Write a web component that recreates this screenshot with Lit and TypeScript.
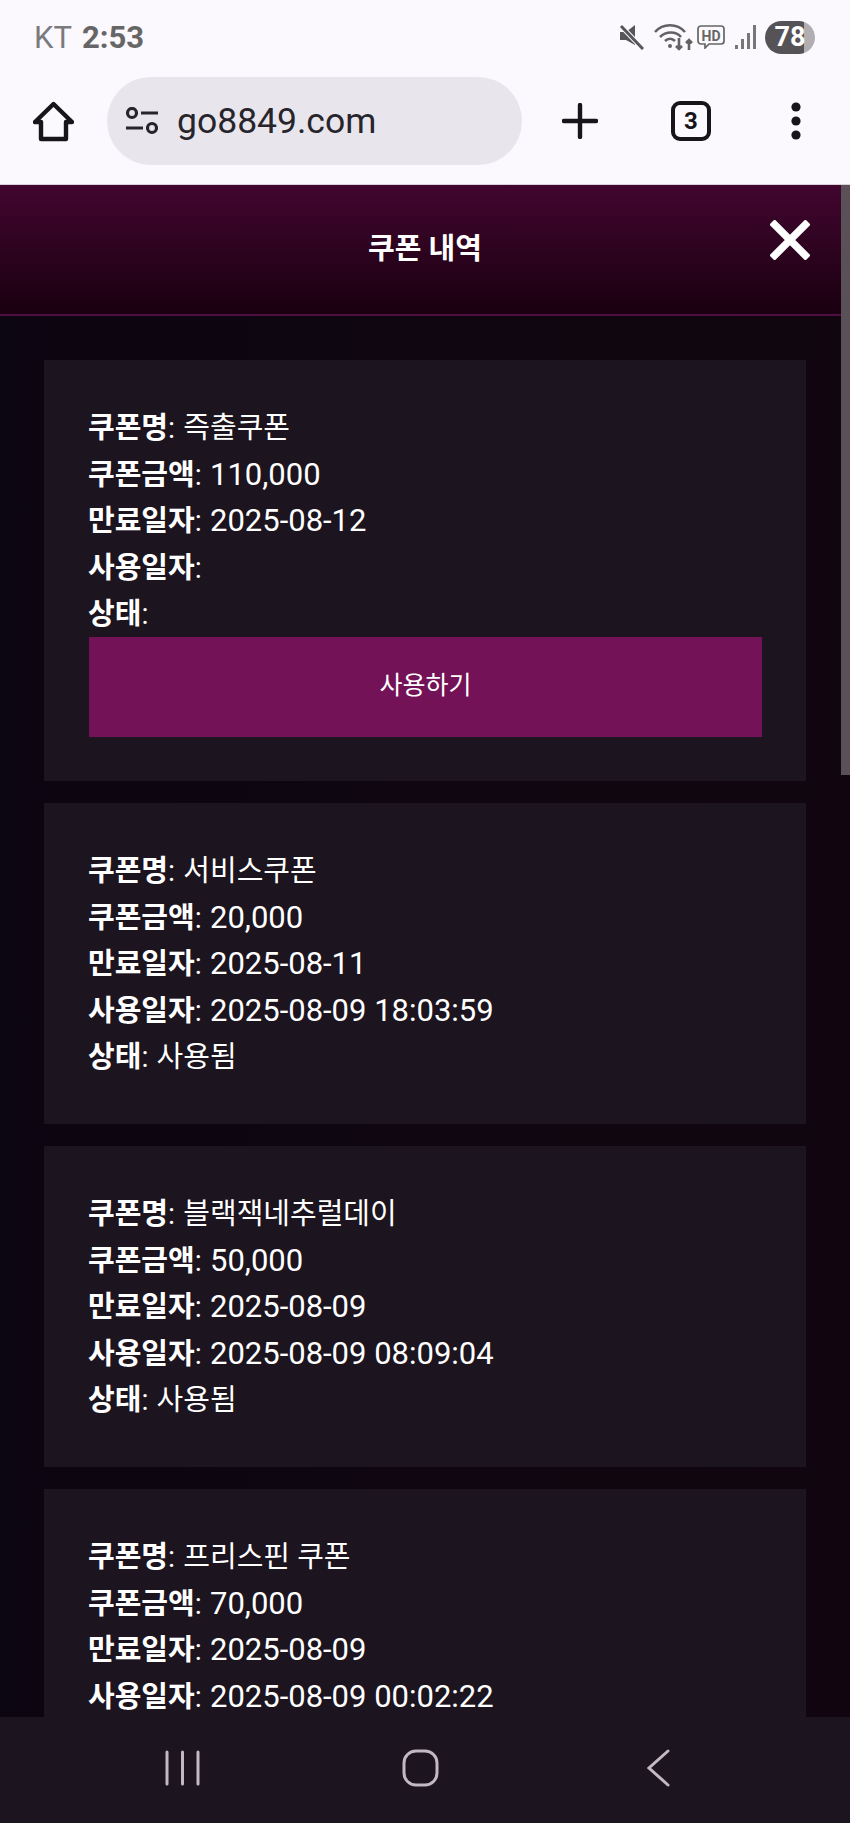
import { LitElement, html, css } from 'lit';
import { customElement } from 'lit/decorators.js';

const coupons = [
  { name: '즉출쿠폰', amount: '110,000', expires: '2025-08-12', used: '', status: '', usable: true },
  { name: '서비스쿠폰', amount: '20,000', expires: '2025-08-11', used: '2025-08-09 18:03:59', status: '사용됨' },
  { name: '블랙잭네추럴데이', amount: '50,000', expires: '2025-08-09', used: '2025-08-09 08:09:04', status: '사용됨' },
  { name: '프리스핀 쿠폰', amount: '70,000', expires: '2025-08-09', used: '2025-08-09 00:02:22', status: '사용됨' },
];

@customElement('app-root')
class AppRoot extends LitElement {
  static styles = css`
    :host {
      display: block;
      width: 850px;
      height: 1823px;
      overflow: hidden;
      font-family: Roboto, "Noto Sans CJK KR", sans-serif;
      background: #fbf9fd;
    }
    .screen {
      height: 100%;
      display: flex;
      flex-direction: column;
    }
    .status {
      height: 66px;
      flex: none;
      display: flex;
      align-items: center;
      padding: 8px 35px 0 34px;
      box-sizing: border-box;
      font-size: 31px;
      color: #7b7b7d;
    }
    .status b {
      margin-left: 10px;
      color: #666;
      font-weight: 700;
    }
    .status-icons {
      margin-left: auto;
      display: flex;
      align-items: center;
    }
    .status-icons svg {
      display: block;
    }
    .battery {
      width: 50px;
      height: 33px;
      margin-left: 8px;
      border-radius: 17px;
      background: linear-gradient(90deg, #555356 78%, #b0aeb1 78%);
      color: #fff;
      font-size: 27px;
      font-weight: 700;
      line-height: 33px;
      text-align: center;
    }
    .toolbar {
      height: 119px;
      flex: none;
      display: flex;
      align-items: flex-start;
      box-sizing: border-box;
      padding: 11px 0 0 33px;
      border-bottom: 1px solid #d9d0da;
    }
    .toolbar svg {
      display: block;
      flex: none;
    }
    .home {
      margin-top: 24px;
    }
    .url {
      width: 415px;
      height: 88px;
      margin-left: 33px;
      border-radius: 44px;
      background: #e8e6ec;
      display: flex;
      align-items: center;
      padding-left: 18px;
      box-sizing: border-box;
      font-size: 35.500px;
      color: #27252b;
    }
    .url span {
      margin-left: 18px;
    }
    .plus {
      margin: 26px 0 0 40px;
    }
    .tabs {
      margin: 24px 0 0 73px;
      width: 40px;
      height: 40px;
      box-sizing: border-box;
      border: 4px solid #17151a;
      border-radius: 9px;
      font-size: 24px;
      font-weight: 700;
      line-height: 32px;
      text-align: center;
      color: #17151a;
    }
    .dots {
      margin: 24px 0 0 80px;
    }
    .modal {
      flex: 1;
      min-height: 0;
      position: relative;
      overflow: hidden;
      background: linear-gradient(90deg, #0c0612, #11060f);
    }
    .head {
      height: 131px;
      box-sizing: border-box;
      padding-bottom: 7px;
      border-bottom: 2px solid #4f0d40;
      background: linear-gradient(180deg, #42062f, #190010);
      color: #fff;
      display: flex;
      align-items: center;
      justify-content: center;
      font-size: 29px;
      font-weight: 700;
      position: relative;
    }
    .close {
      position: absolute;
      left: 770px;
      top: 35px;
      display: block;
    }
    .list {
      padding: 44px 44px 0;
      display: flex;
      flex-direction: column;
      gap: 22.600px;
    }
    .card {
      padding: 44px;
      background: #1c141e;
      color: #fff;
      font-size: 29px;
    }
    .row {
      height: 46.500px;
      line-height: 49px;
    }
    .row b {
      font-weight: 700;
    }
    .val {
      margin-left: 1px;
    }
    .num {
      font-size: 31px;
      line-height: 0;
    }
    .use {
      height: 100px;
      margin-left: 1px;
      padding-bottom: 7px;
      box-sizing: border-box;
      background: #741257;
      display: flex;
      align-items: center;
      justify-content: center;
      font-size: 25px;
    }
    .scrollbar {
      position: absolute;
      right: 0;
      top: 0;
      width: 9px;
      height: 590px;
      background: #5a5058;
    }
    .nav {
      height: 106px;
      flex: none;
      background: #1c141e;
      display: flex;
      justify-content: center;
    }
    .nav svg {
      display: block;
    }
  `;

  renderRow(label: string, value: string, numeric = false) {
    return html`<div class="row"><b>${label}</b>: <span class="val ${numeric ? 'num' : ''}">${value}</span></div>`;
  }

  render() {
    return html`
      <div class="screen">
        <div class="status">
          KT<b>2:53</b>
          <div class="status-icons">
            <svg width="26" height="26" viewBox="0 0 26 26">
              <path d="M2 8h6l9-7v20l-9-5H2z" fill="#55555a"/>
              <path d="M3 2l22 23" stroke="#fbf9fd" stroke-width="5"/>
              <path d="M3 2l22 23" stroke="#55555a" stroke-width="3"/>
            </svg>
            <svg width="40" height="28" viewBox="0 0 40 28" style="margin-left:10px" fill="none" stroke="#626264" stroke-width="2.6">
              <path d="M1 9c8-9 22-9 30 0M6 14c6-6 16-6 21 0M11 18c3-3 7-3 10 0"/>
              <circle cx="16" cy="23" r="2" fill="#626264" stroke="none"/>
              <path d="M25 15v11M22 23l3 3 3-3M35 27V17M32 20l3-3 3 3"/>
            </svg>
            <svg width="28" height="24" viewBox="0 0 28 24" style="margin-left:3px">
              <path d="M4 1h20a3 3 0 0 1 3 3v12a3 3 0 0 1-3 3H12l-4 4v-4H4a3 3 0 0 1-3-3V4a3 3 0 0 1 3-3z" fill="none" stroke="#666" stroke-width="1.7"/>
              <text x="14" y="15.500" text-anchor="middle" font-family="Roboto" font-size="14" font-weight="700" fill="#666">HD</text>
            </svg>
            <svg width="22" height="24" viewBox="0 0 22 24" style="margin-left:10px" fill="#777">
              <rect x="0" y="20" width="3" height="4"/>
              <rect x="6" y="14" width="3" height="10"/>
              <rect x="12" y="8" width="3" height="16"/>
              <rect x="18" y="0" width="3" height="24"/>
            </svg>
            <div class="battery">78</div>
          </div>
        </div>
        <div class="toolbar">
          <svg class="home" width="41" height="41" viewBox="0 0 41 41" fill="none" stroke="#17151a" stroke-width="4.4" stroke-linejoin="round">
            <path d="M2 21L20.500 3 39 21h-6v17H8V21z"/>
          </svg>
          <div class="url">
            <svg width="34" height="28" viewBox="0 0 34 28" fill="none" stroke="#27252b" stroke-width="3.2">
              <circle cx="7" cy="6" r="4.5"/>
              <path d="M16 6h17M1 21h17"/>
              <circle cx="27" cy="21" r="4.5"/>
            </svg>
            <span>go8849.com</span>
          </div>
          <svg class="plus" width="36" height="36" viewBox="0 0 36 36" stroke="#17151a" stroke-width="4.4" stroke-linecap="round">
            <path d="M18 2v32M2 18h32"/>
          </svg>
          <div class="tabs">3</div>
          <svg class="dots" width="10" height="40" viewBox="0 0 10 40" fill="#17151a">
            <circle cx="5" cy="6" r="4.6"/>
            <circle cx="5" cy="20" r="4.6"/>
            <circle cx="5" cy="34" r="4.6"/>
          </svg>
        </div>
        <div class="modal">
          <div class="head">
            쿠폰 내역
            <svg class="close" width="40" height="40" viewBox="0 0 40 40" stroke="#fff" stroke-width="7.5">
              <path d="M2 2l36 36M38 2L2 38"/>
            </svg>
          </div>
          <div class="list">
            ${coupons.map(c => html`
              <div class="card">
                ${this.renderRow('쿠폰명', c.name)}
                ${this.renderRow('쿠폰금액', c.amount, true)}
                ${this.renderRow('만료일자', c.expires, true)}
                ${this.renderRow('사용일자', c.used, true)}
                ${this.renderRow('상태', c.status)}
                ${c.usable ? html`<div class="use">사용하기</div>` : ''}
              </div>
            `)}
          </div>
          <div class="scrollbar"></div>
        </div>
        <div class="nav">
          <svg width="850" height="106" viewBox="0 0 850 106" fill="none" stroke="#c2b9c2" stroke-width="3" stroke-linecap="round">
            <path d="M167 35v32M182.500 35v32M198 35v32"/>
            <rect x="404" y="34" width="33" height="34" rx="12"/>
            <path d="M668 34L649 51l19 17"/>
          </svg>
        </div>
      </div>
    `;
  }
}
